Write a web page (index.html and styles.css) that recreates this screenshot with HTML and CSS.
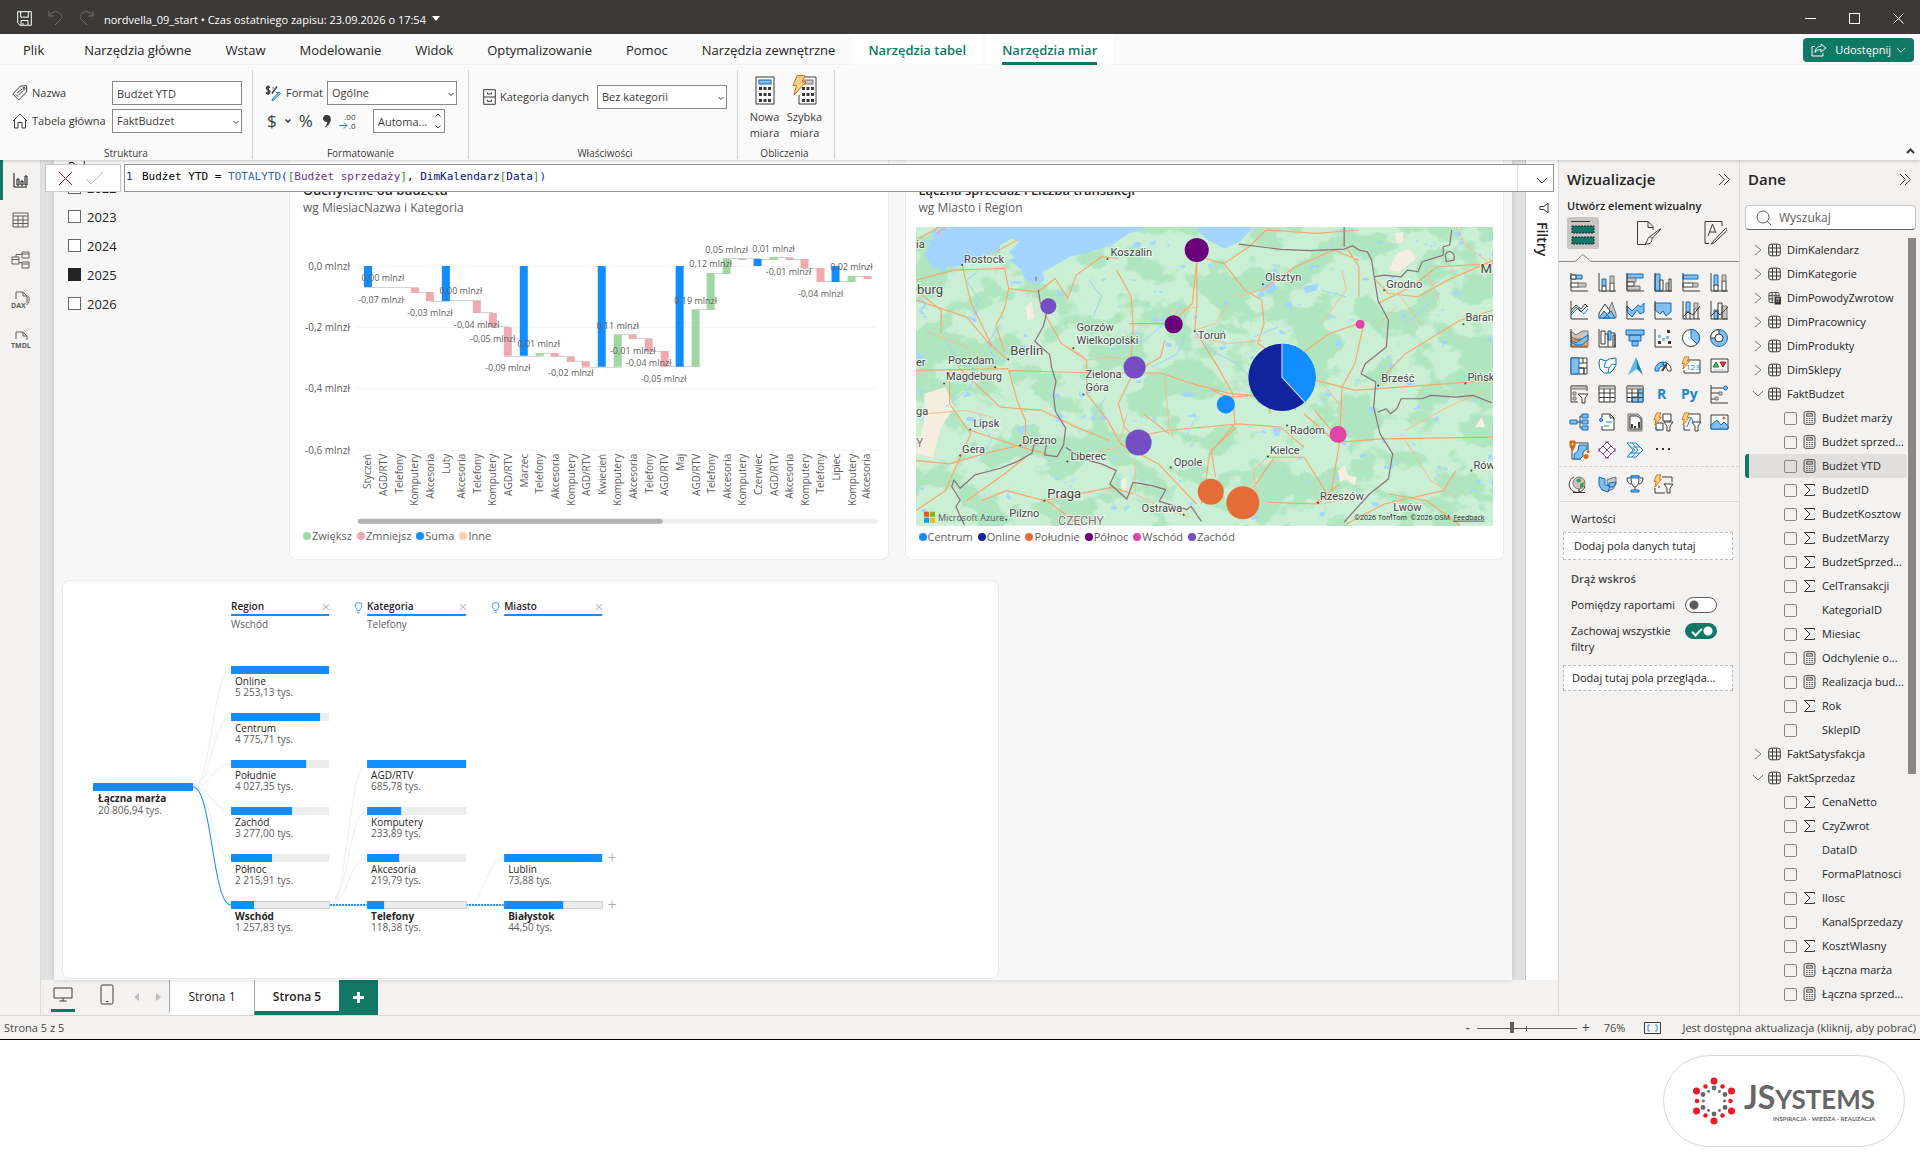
FILE: index.html
```html
<!DOCTYPE html>
<html lang="pl">
<head>
<meta charset="utf-8">
<title>nordvella_09_start</title>
<link rel="stylesheet" href="styles.css">
</head>
<body>
<svg class="defs" aria-hidden="true">
  <symbol id="table" viewBox="0 0 13 13"><rect x=".7" y=".7" width="11.6" height="11.6" rx="2.5"/><path d="M4.5 1v11M8.5 1v11M1 4.500h11M1 8.500h11"/></symbol>
  <symbol id="calc" viewBox="0 0 13 15"><rect x=".7" y=".7" width="11.6" height="13.600" rx="2"/><rect x="3.500" y="3" width="6" height="2.500"/><path d="M3 8h1.500M5.800 8h1.500M8.500 8H10M3 10.200h1.500M5.800 10.200h1.500M8.500 10.200H10M3 12.200h1.500M5.800 12.200h1.500M8.500 12.200H10"/></symbol>
  <symbol id="sum" viewBox="0 0 13 13"><path d="M11.500 2.500V1H1.500L7 6.500 1.500 12h10v-1.500"/></symbol>
  <symbol id="right" viewBox="0 0 8 12"><path d="M1 1l6 5-6 5"/></symbol>
  <symbol id="down" viewBox="0 0 12 8"><path d="M1 1l5 5 5-5"/></symbol>
  <symbol id="dbl" viewBox="0 0 13 13"><path d="M1 1l5.500 5.500L1 12M6 1l5.500 5.500L6 12"/></symbol>
  <symbol id="bolt" viewBox="0 0 10 16"><path d="M4 1h5L7 6h2.500L2 15l1.500-6.500H1z" fill="#fcd283" stroke="#d8690c"/></symbol>
  <symbol id="bulb" viewBox="0 0 10 14"><path d="M3.500 10C3.500 8 1 7 1 4.500a4 4 0 0 1 8 0C9 7 6.500 8 6.500 10zM3.500 12.500h3"/></symbol>
</svg>

<header class="titlebar">
  <button class="bare" aria-label="Zapisz"><svg width="15" height="15" viewBox="0 0 15 15"><path d="M.7.7h13.600v13.600H3L.7 12zM3.700.7v5.500h7.600V.7M4 14V9.500h7V14M6 14v-2"/></svg></button>
  <button class="bare dim" aria-label="Cofnij"><svg width="15" height="16" viewBox="0 0 15 16"><path d="M1 1v5h5M1 6C4 1 9 .5 12 3.500s1.500 5 0 6.500L7 15"/></svg></button>
  <button class="bare dim" aria-label="Ponów"><svg width="15" height="16" viewBox="0 0 15 16"><path d="M14 1v5H9M14 6C11 1 6 .5 3 3.500S1.500 8.500 3 10l5 5"/></svg></button>
  <span class="doc">nordvella_09_start • Czas ostatniego zapisu: 23.09.2026 o 17:54</span>
  <svg class="caret" width="8" height="5" viewBox="0 0 8 5"><path d="M0 0h8L4 5z"/></svg>
  <div class="winbtns">
    <button class="bare" aria-label="Minimalizuj"><svg width="11" height="11"><path d="M0 5.500h11"/></svg></button>
    <button class="bare" aria-label="Maksymalizuj"><svg width="11" height="11"><rect x=".5" y=".5" width="10" height="10"/></svg></button>
    <button class="bare" aria-label="Zamknij"><svg width="11" height="11"><path d="M.5.5l10 10M10.500.5l-10 10"/></svg></button>
  </div>
</header>

<nav class="tabs">
  <a href="#" class="first">Plik</a><a href="#">Narzędzia główne</a><a href="#">Wstaw</a><a href="#">Modelowanie</a><a href="#">Widok</a><a href="#">Optymalizowanie</a><a href="#">Pomoc</a><a href="#">Narzędzia zewnętrzne</a><a href="#" class="ctx">Narzędzia tabel</a><a href="#" class="ctx on"><span>Narzędzia miar</span></a>
  <button class="share"><svg width="16" height="14" viewBox="0 0 16 14"><path d="M4 3.500H1V13h11v-3M10 1l5 4-5 4V6.500C7 6.500 5 7.500 4 9.500 4.200 6 6 3.500 10 3.500z"/></svg>Udostępnij<svg width="10" height="7" viewBox="0 0 12 8"><path d="M1 1l5 5 5-5"/></svg></button>
</nav>

<section class="ribbon">
  <div class="group g1">
    <div class="fields">
      <svg width="16" height="16" viewBox="0 0 16 16"><path d="M8.500 1l6-.2.200 6-8 8.200L.8 9zM5 8l5-4M6.500 10l5-4.500M4 9.500L6.500 12"/><circle cx="12" cy="3.400" r="1"/></svg>
      <label for="nm">Nazwa</label><input id="nm" class="box" value="Budżet YTD">
      <svg width="16" height="16" viewBox="0 0 16 16"><path d="M1 8l7-7 7 7M2.500 7v8H6v-5.500h4V15h3.500V7"/></svg>
      <label for="tb">Tabela główna</label><span class="sel"><select id="tb" class="box"><option>FaktBudzet</option></select><svg><use href="#down"/></svg></span>
    </div>
    <div class="cap">Struktura</div>
  </div>
  <div class="group g2">
    <div class="line">
      <svg width="17" height="17" viewBox="0 0 17 17"><path d="M5 2.500C3 1 1 2 1.500 3.500S5 5 5 7 2 9 1 7.500M3.200.5v9.500M7 8.500l5-7M8 2.500v1M12 7v1" stroke-width="1.400"/><path d="M15.500 8.500L8 15.500l-1 .5.500-2L14 7z" fill="#9bd0f5" stroke="#1a86d0"/></svg>
      <label for="fm">Format</label><span class="sel"><select id="fm" class="box"><option>Ogólne</option></select><svg><use href="#down"/></svg></span>
    </div>
    <div class="line fmt">
      <button class="bare big">$</button><button class="bare" aria-label="Waluta"><svg width="6" height="4" viewBox="0 0 12 8"><path d="M1 1l5 5 5-5" stroke-width="3"/></svg></button><button class="bare big">%</button>
      <button class="bare sep" aria-label="Separator"><svg width="8" height="13" viewBox="0 0 8 13"><path d="M4 0a3.500 3.500 0 1 0 .5 6.800C4 9 3 10.500 1.500 12.500 5 11 7.800 8 7.800 4 7.800 1.500 6 0 4 0z" class="solid"/></svg></button>
      <button class="bare dec" aria-label="Miejsca dziesiętne"><span>.00</span><span><svg width="9" height="7" viewBox="0 0 9 7"><path d="M0 3.500h8M5 .5l3 3-3 3" stroke="#1a86d0"/></svg>.0</span></button>
      <span class="spin"><input class="box" aria-label="Miejsca" value="Automa..."><svg width="6" height="16" viewBox="0 0 6 16"><path d="M.5 3.500L3 1l2.500 2.500M.5 12.500L3 15l2.500-2.500"/></svg></span>
    </div>
    <div class="cap">Formatowanie</div>
  </div>
  <div class="group g3">
    <div class="line">
      <svg width="13" height="16" viewBox="0 0 13 16"><path d="M.7.7h11.600v14.600H.7zM.7 8h11.600M4.500 3.500v1.500h4V3.500M4.500 10.800v1.500h4v-1.500"/></svg>
      <label for="kt">Kategoria danych</label><span class="sel"><select id="kt" class="box"><option>Bez kategorii</option></select><svg><use href="#down"/></svg></span>
    </div>
    <div class="cap">Właściwości</div>
  </div>
  <div class="group g4">
    <div class="bigs">
      <button class="bare"><svg width="28" height="30" viewBox="0 0 28 30"><rect x="5" y="2" width="18" height="27" fill="#fff"/><rect x="8" y="5" width="12" height="4" fill="#83beec" stroke="#0f6cbd"/><path d="M8 13.500h12M8 19.500h12M8 25.500h12" stroke-width="3" stroke-dasharray="3 1.500"/></svg>Nowa<br>miara</button>
      <button class="bare"><svg width="28" height="30" viewBox="0 0 28 30"><path d="M8 20v9h17V2H12" fill="#fff"/><rect x="13" y="5" width="9" height="4" fill="#c8c6c4" stroke="#797775"/><path d="M11 13.500h12M11 19.500h12M11 25.500h12" stroke-width="3" stroke-dasharray="3 1.500"/><path d="M6 .7h8L11 7h4L3 20l2.500-9.500H2z" fill="#fcd283" stroke="#d8690c"/></svg>Szybka<br>miara</button>
    </div>
    <div class="cap">Obliczenia</div>
  </div>
  <button class="bare collapse" aria-label="Zwiń"><svg width="9" height="6" viewBox="0 0 9 6"><path d="M1 5l3.500-3.500L8 5" stroke-width="2"/></svg></button>
</section>

<main class="app">
  <nav class="rail">
    <button class="bare on" aria-label="Raport"><svg width="15" height="16" viewBox="0 0 15 16"><path d="M1 1v14h13M4 7h2v6H4zM8 9h2v4H8zM12 4h2v9h-2z"/></svg></button>
    <button class="bare" aria-label="Tabela"><svg width="17" height="16" viewBox="0 0 17 16"><path d="M1 1h15v14H1zM1 4h15M1 8h15M1 11.500h15M6 4v11M11 4v11"/></svg></button>
    <button class="bare" aria-label="Model"><svg width="19" height="18" viewBox="0 0 19 18"><path d="M1 6h7v7H1zM1 8.500h7M11 1h7v6h-7zM11 3h7M11 11h7v6h-7zM11 13h7M5 6V3.500h6M8 11.500h3"/></svg></button>
    <button class="bare" aria-label="DAX"><svg width="20" height="20" viewBox="0 0 20 20"><path d="M5 9V2h7l4 4v7M12 2v4h4M17 5.500c2 3 1.500 7-1.500 9.500"/><text x="0" y="18">DAX</text></svg></button>
    <button class="bare" aria-label="TMDL"><svg width="20" height="20" viewBox="0 0 20 20"><path d="M5 9V2h7l4 4v4M12 2v4h4"/><text x="0" y="18">TMDL</text></svg></button>
  </nav>

  <div class="center">
    <div class="stage">
      <div class="formula">
        <div class="confirm">
          <button class="bare" aria-label="Anuluj"><svg width="15" height="15"><path d="M1 1l13 13M14 1L1 14" stroke="#b50e0e"/></svg></button>
          <button class="bare" aria-label="Zatwierdź"><svg width="19" height="14"><path d="M1 8l5 5L18 1" stroke="#c0c0c0"/></svg></button>
        </div>
        <div class="editor"><code><span class="ln">1</span>Budżet YTD = <b class="fn">TOTALYTD</b><b class="p1">(</b><b class="p2">[</b><b class="ms">Budżet sprzedaży</b><b class="p2">]</b>, <b class="cl">DimKalendarz</b><b class="p2">[</b><b class="cl">Data</b><b class="p2">]</b><b class="p1">)</b></code>
          <button class="bare more" aria-label="Rozwiń"><svg width="12" height="8"><use href="#down"/></svg></button></div>
      </div>

      <div class="canvas">
        <div class="page">
          <div class="row">
            <fieldset class="slicer">
              <legend>Rok</legend>
              <label><input type="checkbox">2022</label>
              <label><input type="checkbox">2023</label>
              <label><input type="checkbox">2024</label>
              <label><input type="checkbox" checked>2025</label>
              <label><input type="checkbox">2026</label>
            </fieldset>

            <article class="card">
              <h3>Odchylenie od budżetu</h3>
              <p>wg MiesiacNazwa i Kategoria</p>
              <svg class="chart" viewBox="299 217 578 308">
                <path d="M356 266.500h521M356 327.500h521M356 388.500h521M356 450.500h521" stroke="#f3f3f3"/>
                <g class="axis"><text x="349" y="270">0,0 mlnzł</text><text x="349" y="331">-0,2 mlnzł</text><text x="349" y="392">-0,4 mlnzł</text><text x="349" y="454">-0,6 mlnzł</text></g>
                <path class="link" d="M363 287.500h55M414 292.500h18M429 301.500h20M441 300.500h39M472 312.500h20M488 326.500h20M503 356.500h40M534 353.500h24M550 356.500h24M566 361.500h24M581 367.500h40M613 334.500h24M628 338.500h24M644 351.500h24M660 366.500h40M691 309.500h24M706 273.500h24M722 258.500h38M753 259.500h24M769 257.500h24M785 259.500h24M800 268.500h24M816 281.500h40M847 276.500h24"/>
                <path fill="#118dff" d="M363 266h8v21h-8zM441 266h8v35h-8zM519 266h8v90h-8zM597 266h8v101h-8zM675 266h8v101h-8zM753 259h8v7h-8zM831 266h8v16h-8z"/>
                <path fill="#eeaab0" d="M410 288h8v5h-8zM425 292h8v9h-8zM472 301h8v12h-8zM488 313h8v14h-8zM503 327h8v29h-8zM550 353h8v4h-8zM566 357h8v5h-8zM581 362h8v5h-8zM628 335h8v4h-8zM644 339h8v12h-8zM660 351h8v16h-8zM738 259h8v1h-8zM785 258h8v2h-8zM800 259h8v9h-8zM816 268h8v14h-8zM863 276h8v3h-8z"/>
                <path fill="#a0d8a1" d="M535 353h8v3h-8zM613 335h8v32h-8zM691 310h8v57h-8zM706 273h8v37h-8zM722 259h8v15h-8zM769 257h8v3h-8zM847 276h8v6h-8z"/>
                <g class="val"><text x="382" y="281">0,00 mlnzł</text><text x="380" y="303">-0,07 mlnzł</text><text x="429" y="316">-0,03 mlnzł</text><text x="460" y="294">0,00 mlnzł</text><text x="476" y="328">-0,04 mlnzł</text><text x="492" y="342">-0,05 mlnzł</text><text x="538" y="347">0,01 mlnzł</text><text x="507" y="371">-0,09 mlnzł</text><text x="570" y="376">-0,02 mlnzł</text><text x="617" y="329">0,11 mlnzł</text><text x="632" y="354">-0,01 mlnzł</text><text x="648" y="366">-0,04 mlnzł</text><text x="663" y="382">-0,05 mlnzł</text><text x="695" y="304">0,19 mlnzł</text><text x="710" y="267">0,12 mlnzł</text><text x="726" y="253">0,05 mlnzł</text><text x="773" y="252">0,01 mlnzł</text><text x="788" y="275">-0,01 mlnzł</text><text x="851" y="270">0,02 mlnzł</text><text x="820" y="297">-0,04 mlnzł</text></g>
                <g class="cat" transform="translate(0 454) rotate(-90)"><text y="370">Styczeń</text><text y="386">AGD/RTV</text><text y="402">Telefony</text><text y="417">Komputery</text><text y="433">Akcesoria</text><text y="449">Luty</text><text y="464">Akcesoria</text><text y="480">Telefony</text><text y="495">Komputery</text><text y="511">AGD/RTV</text><text y="527">Marzec</text><text y="542">Telefony</text><text y="558">Akcesoria</text><text y="574">Komputery</text><text y="589">AGD/RTV</text><text y="605">Kwiecień</text><text y="620">Komputery</text><text y="636">Akcesoria</text><text y="652">Telefony</text><text y="667">AGD/RTV</text><text y="683">Maj</text><text y="699">AGD/RTV</text><text y="714">Telefony</text><text y="730">Akcesoria</text><text y="745">Komputery</text><text y="761">Czerwiec</text><text y="777">AGD/RTV</text><text y="792">Akcesoria</text><text y="808">Komputery</text><text y="823">Telefony</text><text y="839">Lipiec</text><text y="855">Komputery</text><text y="870">Akcesoria</text></g>
                <rect x="357" y="519" width="520" height="5" rx="2" fill="#efefef"/><rect x="357" y="519" width="305" height="5" rx="2" fill="#b3b3b3"/>
              </svg>
              <ul class="legend"><li class="c-up">Zwiększ</li><li class="c-dn">Zmniejsz</li><li class="c-bl">Suma</li><li class="c-in">Inne</li></ul>
            </article>

            <article class="card">
              <h3>Łączna sprzedaż i Liczba transakcji</h3>
              <p>wg Miasto i Region</p>
              <svg class="chart map" viewBox="917 227 576 298">
                <defs><filter id="forest" x="0" y="0" width="1" height="1" color-interpolation-filters="sRGB"><feTurbulence type="fractalNoise" baseFrequency=".024 .03" numOctaves="4" seed="12"/><feColorMatrix values="0 0 0 0 .69 0 0 0 0 .9 0 0 0 0 .75 14 0 0 0 -6.900"/></filter>
                <filter id="lakes" x="0" y="0" width="1" height="1" color-interpolation-filters="sRGB"><feTurbulence type="fractalNoise" baseFrequency=".06 .08" numOctaves="3" seed="4"/><feColorMatrix values="0 0 0 0 .64 0 0 0 0 .84 0 0 0 0 1 0 18 0 0 -13.200"/></filter></defs>
                <path fill="#caefd4" d="M916 227h577v298H916z"/>
                <rect x="916" y="227" width="577" height="298" filter="url(#forest)"/>
                <rect x="916" y="227" width="577" height="298" filter="url(#lakes)"/>
                <g class="geo" transform="translate(900 180) scale(.4209 .3333)">
                  <path fill="#f6efe0" d="M60 640l50-20 20 60-30 60-20 90-40-10 10-50 10-50zM1160 270l20-50 30-15 15 30-40 40zM300 380l15-15 5 50-15 5zM1040 870l15-15 10 30 20 5-5 25-20-20-15 10zM1365 740l15-30 10 30zM1175 160l20-5v30l-15 5zM525 900l15-10v30l-10 20z"/>
                  <path fill="#a3d5ff" d="M95 141l-20 15 10 20-25 5 15 10-15 30 20 45 32-12 12 8 26-7 25-20 55-20 35-40 15 10-30 40 40 45 10 30 30 12 15-12-5-25 25-15 40-30 50-15 50-20 40-35 40-15 40-20 40-4h32l10 29 25 30 40 25 35-20 35-45 35-19zM860 315l25-10 15 20-20 15-10-5zM955 320l40-10-5 20-25 10z"/>
                  <path fill="#caefd4" d="M240 195l30-18 15 10-25 30 15 15-30 15-25-15 20-10zM715 172l8 5 10 25-6 2z"/>
                  <g class="roads">
                    <path d="M40 300l90-30 120-5 10 60 70 10 40-40 30 60 20-70 60-55 40 5M150 256l20 110 50 130 40 45M95 141l-55 40M230 215l50-35M110 141l-20 20M260 325l-10 60-20 50 20 80M40 360l120 50 60 90M40 330l60 60 0 70M345 400l40 90 60 50 0 100 50 80 30 70 90 60 90 120M260 570l110 5 150 3 100 0 70 30 90 30 70 10 60 20M630 480l-10 50-40 30-30 30-30 80 15 70 40 60M545 430h100l50-60 10-120M515 268l35 80 5 90-5 100 10 30M706 220v150l-5 80 50 100 40 90 5 90-60 90-10 90-10 60M710 230l60 20 50 80 40 30 5 70-15 60 50 40M1090 430l-70 30-60 55M860 330l80-70 90-50 60 30M870 150l-40 50-60 50M870 150l120 10 100-10M910 500l30 190M985 690l60 90-20 150-30 40-120-5M960 800l-55-60-100-10-170 20-60 15M1100 440l-20 110-30 70-5 140M990 600l90 30 330-30M1045 785l100-10 263-5M800 740l-60 70 10 80M890 830l-50 90M985 970l60-60M500 780l-80-40-80-50-100-10-100-120M260 570l20 90 20 60 0 80M170 750l120 50 60 20M120 570l0 100 50 90-60 170-70 60M160 960l90-80 50-50M345 960l160-40 50 20M345 960l-90-30-60 30M350 960l80 74M1090 350v-90l-30-60M1135 370l80-50 60-60 140-10M1130 300l30 40 70 10 70-50 110-60M1140 600l60-80 130-100 78-30M960 700l70 80M880 700l-10-60-80 10-30-10M40 570l220-5M40 840l80 10 80-30 100-30M1160 940l90 20 80 74M1060 1030l90-60 140-40 30-60M730 620l60 40M640 760l-60-60M870 830l90 0 60 120"/>
                    <path class="thin" d="M440 540l60-10 60 10M640 440l20-50 50-10M700 470l80 20 80-10M780 370l-30 60-50 20M1000 600l60 100M630 590l10 150 10 30M1000 430l60-100-10-60M1240 440l-50-90M1250 270l30 90M60 450l100 50 70 70M60 700l100-10 60 20M400 500l40 30M800 350l80-30M1200 750l100-70 90-50M1200 780l60 120 60 50M1320 141l20 50 60 60M540 700l-20 100-90 30M560 840l0 100M850 960l-10-90 40-50M1130 440l50-60M560 940l60 40 70 30M1000 970l80-20"/>
                  </g>
                  <g class="water"><path d="M200 260l-40 40 30 60-20 40M110 480l30 60 40 30-10 50-60 60M240 430l-30 60 20 60M600 560l60-40 20-60M700 450l40 60 60 40 50 60 60 60M640 420l-60 60-80 30M900 440l-60 30M490 650l-30 60M1000 330l60 20M450 300l30 50-20 60M1200 430l60-60M190 700l30 80-30 60M700 720l-20 50M310 290l20 40"/></g>
                  <g class="bord"><path d="M325 290v12M330 328l5 40 15 30-8 40-20 45 35 40 5 40 10 40-6 40 5 50 24 50-5 50-15 35-30-5 5-35-30 5-5 25-35 25-40 20-60 20-35 40-15-25-5 20 20 40-10 20 20 55M395 800l40 35 45 15 35 20-15 40 40 45 15-50 45 10 32 12-15 35 65 25 10-10 25 45M805 192l100 16 70 4 80-5 20-10 15 13 20 5 10 25 5 40 10 80 25 60-5 80-50 50-10 30 35 25-5 75 15 80 30 60-10 75-45 45-60 84M1055 141v60M1125 290l25-5 40 5 15-20 25 5 10-30 50-20 0-25 15-5 5-45M1135 695l20-10 10 15 15-15 10-30 50 0 20-10 60 5 40-5 45 22M1295 225c5-20 25-10 20 15l-18 5z"/></g>
                </g>
                <g class="dots"><path d="M963 265h0M1108 259h0M1263 284h0M1384 290h0M1463 324h0M1195 331h0M1074 348h0M1009 359h0M996 367h0M945 383h0M1084 394h0M1378 385h0M1465 383h0M1287 425h0M1268 456h0M971 429h0M1021 445h0M961 455h0M1068 461h0M1171 467h0M1184 514h0M1318 502h0M1391 514h0M1471 470h0M1045 500h0M1007 519h0"/></g>
                <g class="city"><text x="965" y="263">Rostock</text><text x="1111" y="256">Koszalin</text><text x="1265" y="281">Olsztyn</text><text x="1386" y="288">Grodno</text><text x="1465" y="321">Baran</text><text x="1198" y="339">Toruń</text><text x="1077" y="331">Gorzów</text><text x="1077" y="344">Wielkopolski</text><text x="949" y="364">Poczdam</text><text x="947" y="380">Magdeburg</text><text x="1086" y="378">Zielona</text><text x="1086" y="391">Góra</text><text x="1381" y="382">Brześć</text><text x="1467" y="381">Pińsk</text><text x="1290" y="433">Radom</text><text x="1270" y="453">Kielce</text><text x="974" y="426">Lipsk</text><text x="1023" y="443">Drezno</text><text x="963" y="452">Gera</text><text x="1071" y="459">Liberec</text><text x="1174" y="465">Opole</text><text x="1142" y="511">Ostrawa</text><text x="1320" y="499">Rzeszów</text><text x="1393" y="510">Lwów</text><text x="1473" y="468">Rów</text><text x="1010" y="516">Pilzno</text><text x="917" y="248">ia</text><text x="917" y="366">er</text><text x="917" y="415">ga</text>
                <g class="lg"><text x="1011" y="355">Berlin</text><text x="1048" y="497">Praga</text><text x="918" y="294">burg</text><text x="1480" y="273">M</text></g><text class="ctry" x="1059" y="524">CZECHY</text><text class="ctry" x="917" y="446">Y</text></g>
                <g class="bubbles"><circle cx="1197" cy="250" r="12" fill="#6b007b"/><circle cx="1174" cy="324" r="9" fill="#6b007b"/><g fill="#744ec2"><circle cx="1049" cy="306" r="8"/><circle cx="1135" cy="367" r="11"/><circle cx="1139" cy="442" r="13"/></g><circle cx="1226" cy="404" r="9" fill="#118dff"/><g fill="#e66c37"><circle cx="1211" cy="491" r="13"/><circle cx="1243" cy="502" r="16.500"/></g><g fill="#e044a7"><circle cx="1338" cy="434" r="8.500"/><circle cx="1360" cy="324" r="4.500"/></g>
                <circle cx="1282" cy="377" r="33.500" fill="#12239e"/><path d="M1282 377v-33.500a33.500 33.500 0 0 1 23 58z" fill="#118dff" stroke="none"/><path d="M1282 343v34l23 25" stroke="#d5e4ff" fill="none"/></g>
                <path d="M925 511h5v5h-5z" fill="#f25022"/><path d="M931 511h5v5h-5z" fill="#7fba00"/><path d="M925 517h5v5h-5z" fill="#00a4ef"/><path d="M931 517h5v5h-5z" fill="#ffb900"/>
                <text class="azure" x="939" y="520">Microsoft Azure</text>
                <text class="copy" x="1484" y="519">©2026 TomTom  ©2026 OSM  <tspan text-decoration="underline">Feedback</tspan></text>
              </svg>
              <ul class="legend"><li class="c-bl">Centrum</li><li class="c-nv">Online</li><li class="c-or">Południe</li><li class="c-pu">Północ</li><li class="c-pk">Wschód</li><li class="c-vi">Zachód</li></ul>
            </article>
          </div>

          <article class="card tree">
            <svg class="chart" viewBox="63 581 935 397">
              <g class="soft"><path d="M193 787c19 0 19-117 38-117M193 787c19 0 19-70 38-70M193 787c19 0 19-23 38-23M193 787c19 0 19 23 38 23M193 787c19 0 19 71 38 71M329 905c19 0 19-141 38-141M329 905c19 0 19-94 38-94M329 905c19 0 19-47 38-47M466 905c19 0 19-47 38-47"/></g>
              <path d="M193 787c19 0 19 118 38 118" fill="none" stroke="#118dff"/><path d="M330 905h37M466 905h38" stroke="#118dff" stroke-width="2" stroke-dasharray="2 1"/>
              <path fill="#ececec" d="M231 666h98v8h-98zM231 713h98v8h-98zM231 760h98v8h-98zM231 807h98v8h-98zM231 854h98v8h-98zM231 901h98v8h-98zM367 760h99v8h-99zM367 807h99v8h-99zM367 854h99v8h-99zM367 901h99v8h-99zM504 854h98v8h-98zM504 901h98v8h-98z"/>
              <path fill="none" stroke="#cfcfcf" d="M231 901.500h98.500v7H231zM367 901.500h99.500v7H367zM504 901.500h98.500v7H504z"/>
              <path fill="#118dff" d="M93 783h100v8H93zM231 666h98v8h-98zM231 713h89v8h-89zM231 760h75v8h-75zM231 807h61v8h-61zM231 854h41v8h-41zM231 901h23v8h-23zM367 760h99v8h-99zM367 807h34v8h-34zM367 854h32v8h-32zM367 901h17v8h-17zM504 854h98v8h-98zM504 901h59v8h-59zM231 614h98v2h-98zM367 614h99v2h-99zM504 614h98v2h-98z"/>
              <g class="head"><text x="231" y="610">Region</text><text x="367" y="610">Kategoria</text><text x="504" y="610">Miasto</text></g>
              <g class="num"><text x="231" y="628">Wschód</text><text x="367" y="628">Telefony</text></g>
              <path d="M323 604l6 6M329 604l-6 6M460 604l6 6M466 604l-6 6M596 604l6 6M602 604l-6 6M608 857.500h8M612 853.500v8M608 904.500h8M612 900.500v8" stroke="#b0b0b0"/>
              <g fill="none" stroke="#118dff"><use href="#bulb" x="354" y="602" width="9" height="12"/><use href="#bulb" x="491" y="602" width="9" height="12"/></g>
              <g class="name"><text x="235" y="685">Online</text><text x="235" y="732">Centrum</text><text x="235" y="779">Południe</text><text x="235" y="826">Zachód</text><text x="235" y="873">Północ</text><text x="371" y="779">AGD/RTV</text><text x="371" y="826">Komputery</text><text x="371" y="873">Akcesoria</text><text x="508" y="873">Lublin</text></g>
              <g class="head sel-node"><text x="98" y="802">Łączna marża</text><text x="235" y="920">Wschód</text><text x="371" y="920">Telefony</text><text x="508" y="920">Białystok</text></g>
              <g class="num"><text x="98" y="814">20 806,94 tys.</text><text x="235" y="696">5 253,13 tys.</text><text x="235" y="743">4 775,71 tys.</text><text x="235" y="790">4 027,35 tys.</text><text x="235" y="837">3 277,00 tys.</text><text x="235" y="884">2 215,91 tys.</text><text x="235" y="931">1 257,83 tys.</text><text x="371" y="790">685,78 tys.</text><text x="371" y="837">233,89 tys.</text><text x="371" y="884">219,79 tys.</text><text x="371" y="931">118,38 tys.</text><text x="508" y="884">73,88 tys.</text><text x="508" y="931">44,50 tys.</text></g>
            </svg>
          </article>
        </div>
      </div>
      <aside class="filters"><svg width="10" height="12" viewBox="0 0 10 12"><path d="M9 1v10L5 7.500H1v-3h4z"/></svg><span>Filtry</span></aside>
    </div>

    <nav class="pages">
      <button class="bare view on" aria-label="Komputer"><svg width="20" height="15" viewBox="0 0 20 15"><path d="M1 1h18v10H1zM10 11v3M6.500 14h7"/></svg></button>
      <button class="bare view" aria-label="Telefon"><svg width="14" height="21" viewBox="0 0 14 21"><rect x="1" y="1" width="12" height="19" rx="1.500"/><path d="M6 17.500h2.500"/></svg></button>
      <button class="bare arr" aria-label="Wstecz"><svg width="5" height="8"><path d="M5 0v8L0 4z"/></svg></button>
      <button class="bare arr" aria-label="Dalej"><svg width="5" height="8"><path d="M0 0v8l5-4z"/></svg></button>
      <button class="bare pg">Strona 1</button><button class="bare pg on">Strona 5</button>
      <button class="bare add" aria-label="Nowa strona"><svg width="11" height="11"><path d="M5.500 0v11M0 5.500h11" stroke="#fff" stroke-width="3"/></svg></button>
    </nav>
  </div>

  <aside class="pane viz">
    <h2>Wizualizacje<svg width="13" height="13"><use href="#dbl"/></svg></h2>
    <h4>Utwórz element wizualny</h4>
    <div class="modes">
      <button class="bare on" aria-label="Kompiluj"><svg width="26" height="26" viewBox="0 0 26 26"><path d="M1 1.500h19"/><path d="M2 6h22v7H2zM2 17h22v7H2z" fill="#117865" stroke="#222" stroke-dasharray="2 1"/></svg></button>
      <button class="bare" aria-label="Formatuj"><svg width="26" height="26" viewBox="0 0 26 26"><path d="M10 24.500H1.500V1.500H12l5 5V10M12 1.500v6h5M25 9l-9 9.500-2-2L24 9zM14 17c-3 0-2 5-5 6.500 4 1.500 7-.5 7-4.500"/></svg></button>
      <button class="bare" aria-label="Analiza"><svg width="24" height="26" viewBox="0 0 24 26"><path d="M19 6V1.500H2v22h4M5 16L9.500 4 13 13M6.500 12h6M22.500 8.500L11 20.500 8 24l3.500-1.500L23.500 11c1-1.500 0-3-1-2.500z"/></svg></button>
    </div>
    <svg class="notch" viewBox="0 0 180 9" preserveAspectRatio="none"><path d="M0 8.500h16l8-7 8 7h148"/></svg>
    <div class="icons">
      <svg><path d="M1 0v18h17"/><path class="b" d="M1 2h11v4H1z"/><path class="w" d="M1 2h5v4H1zM1 10h8v4H1z"/><path class="g" d="M8 10h8v4H8z"/></svg>
      <svg><path d="M1 0v18h17"/><path class="b" d="M4 6h4v7H4z"/><path class="w" d="M4 13h4v5H4zM12 10h4v8h-4z"/><path class="g" d="M12 3h4v7h-4z"/></svg>
      <svg><path class="b" d="M1 1h16v4H1z"/><path class="g" d="M1 5h9v4H1zM1 13h13v4H1z"/><path class="w" d="M1 9h7v4H1z"/><path d="M1 0v18h17"/></svg>
      <svg><path class="b" d="M1 1h5v17H1z"/><path class="w" d="M6 7h3v11H6z"/><path class="g" d="M12 10h3v8h-3z"/><path class="w" d="M15 6h2v12h-2z"/><path d="M1 0v18h17"/></svg>
      <svg><path class="b" d="M1 2h15v4H1z"/><path class="w" d="M1 10h10v4H1z"/><path class="g" d="M11 10h5v4h-5z"/><path d="M1 0v18h17"/></svg>
      <svg><path class="b" d="M4 2h4v12H4z"/><path class="w" d="M4 12h4v6H4zM12 8h4v10h-4z"/><path class="g" d="M12 2h4v6h-4z"/><path d="M1 0v18h17"/></svg>
      <svg><path class="bl" d="M1 14l7-7 6 6 4-5"/><path d="M1 9l5-5 5 4 4-5 3 3M1 0v18M1 18h17M1 12l5-6 5 5 6-6"/></svg>
      <svg><path class="g" d="M7 17l7-16 4 12v4z"/><path class="w" d="M1 12l6-9 5 7-5 7H1z"/><path class="b" d="M1 17l5-7 6 7zM6 17l7-7 4 7z"/></svg>
      <svg><path class="b" d="M1 5l5 5 6-6 3 2 3-4v9l-4 2-3-4-5 7-5-5z"/><path d="M1 0v18h17"/></svg>
      <svg><path class="b" d="M1 2h16v9l-5 4-3-5-3 3-5-4z"/><path d="M1 0v18h17"/></svg>
      <svg><path class="b" d="M4 1h4v10H4z"/><path class="g" d="M12 2h4v6h-4z"/><path d="M1 0v18h17M4 11v7M8 11v7M12 8v10M16 8v10M1 16l5-5 5 3 7-9"/></svg>
      <svg><path class="g" d="M12 5h5v13h-5z"/><path class="b" d="M4 9h4v9H4z"/><path d="M1 0v18h17M8 18V2h4v16M1 15l5-5 4 4 8-8"/></svg>
      <svg><path class="o" d="M1 6h17v5H1zM1 15l6-5 4 3 7-4v8H1z"/><path class="g" d="M1 2l5 4 6-4h6v4l-6 4H6L1 8z"/><path class="b" d="M1 11l5 3 6-4 6-4v5l-6 5H6l-5-3z"/><path d="M1 0v18h17"/></svg>
      <svg><path class="w" d="M3 2h4v13H3zM15 6h2v11h-2z"/><path class="b" d="M10 2h3v9h-3z"/><path d="M1 0v18h17M7 5h3v13M13 4h4v14"/></svg>
      <svg><path class="b" d="M0 1h18v5H0zM3 6h12v6H3zM6 12h6v5H6z"/></svg>
      <svg><path d="M1 0v18h17"/><path class="dk" d="M4 12h3v3H4zM13 1h3v3h-3zM14 12h3v3h-3z"/><path class="lt" d="M4 6h3v3H4zM8 9h3v3H8zM12 7h3v3h-3z"/></svg>
      <svg><circle class="w" cx="9" cy="9" r="8.500"/><path class="b" d="M9 .5a8.500 8.500 0 0 1 6 14.500L9 9z"/></svg>
      <svg><circle class="b" cx="9" cy="9" r="8.500"/><path class="w" d="M.5 9A8.500 8.500 0 0 1 9 .5V5L5 9z"/><circle class="w" cx="9" cy="9" r="4"/></svg>
      <svg><path class="w" d="M1 1h16v16H1zM9 11h5v6"/><path class="b" d="M1 1h8v16H1z"/><path d="M9 6h8M13 1v5M9 11h8M14 11v6"/></svg>
      <svg><path class="w" d="M2 2l6 2 3-2 7-1v7l-3 5-3 3H6l-4-4-1-6z" stroke="#0f6cbd"/><path class="bl" d="M8 4l-2 6 5 1 3-4 4 1M11 11l-1 5"/></svg>
      <svg><path fill="#69b7dc" stroke="none" d="M10 0L2 18l9-6z"/><path fill="#1380b8" stroke="none" d="M10 0l7 18-6-6z"/></svg>
      <svg><path class="b" d="M1 14a8 8 0 0 1 8-9v4a4 4 0 0 0-4 5zM9 5a8 8 0 0 1 4 1l-3 4z"/><path class="w" d="M13 6a8 8 0 0 1 4 8h-3l-2-4z"/><path d="M8 14l4-6" stroke-width="2"/></svg>
      <svg><path class="w" d="M5 3h13v13H2v-3"/><text x="4" y="13">123</text><use href="#bolt" x="-1" y="-1" width="9" height="14"/></svg>
      <svg><path class="w" d="M1 2h17v13H1z"/><path fill="#5faf68" stroke="#217b2f" d="M3 10l3-5 3 5z"/><path fill="#e33" stroke="#a4262c" d="M10 5h6l-3 5z"/><path d="M3 13h13" stroke="#bbb"/></svg>
      <svg><path d="M8 17H1V1h16v5"/><path class="g" d="M1 1h16v3H1z"/><path class="g" d="M3 7h3v3H3zM3 12h3v3H3z"/><path class="w" d="M8 9h10l-3 4v5h-3v-5z"/></svg>
      <svg><path class="w" d="M1 1h16v16H1z"/><path class="g" d="M1 1h16v3H1z"/><path d="M1 8h16M1 12.500h16M6 4v13M12 4v13"/></svg>
      <svg><path class="w" d="M1 1h16v16H1z"/><path class="b" d="M12 4h5v13H6v-5h6z"/><path class="g" d="M1 1h16v3H1z"/><path d="M1 8h16M1 12.500h16M6 4v13M12 4v13"/></svg>
      <svg><text class="ltr" x="3" y="14">R</text></svg>
      <svg><text class="ltr" x="-1" y="14">Py</text></svg>
      <svg><path d="M1 0v18h17M1 3h14M1 8h9M1 14h5"/><circle class="b" cx="15.500" cy="3" r="2"/><path class="g" d="M9 7h3v3H9zM5 12h3v3H5z"/></svg>
      <svg><path d="M6 9h4M10 3v12M10 3h3M10 15h3M10 9h3"/><path class="b" d="M0 7h7v4H0zM12 1h6v4h-6zM12 7h6v4h-6zM12 13h6v4h-6z"/></svg>
      <svg><path class="w" d="M4 5V1h8l4 4v12H4v-4M12 1v4h4"/><path class="bl" d="M8 9h6M6 13h5"/><circle class="b" cx="3" cy="7" r="1.500"/></svg>
      <svg><path class="g" d="M2 1h10l4 4v13H2z"/><path class="w" d="M4 3h7l4 3v10H4z"/><path d="M6 15v-4M9 15v-2M13 15V9" stroke-width="2"/></svg>
      <svg><path class="w" d="M9 1h8v7H9zM2 10h7v7H2z"/><path class="bl" d="M2 14v3h4"/><use href="#bolt" x="-1" y="-1" width="9" height="14"/><path class="w" d="M10 9h9l-3 4v5h-3v-5z"/></svg>
      <svg><path class="w" d="M6 1h12v8M2 12v5h6"/><path class="bl" d="M5 14l4-10 3 7"/><use href="#bolt" x="-1" y="-1" width="9" height="14"/><path class="w" d="M10 9h9l-3 4v5h-3v-5z"/></svg>
      <svg><path class="w" d="M1 2h17v14H1z"/><path class="b" d="M1 12l6-5 4 5 3-3 4 4v3H1z"/><circle cx="14" cy="5" r="1" fill="#d8690c" stroke="#d8690c"/></svg>
      <svg><path class="w" d="M5 2h13v7M2 9v9h9"/><path class="b" d="M9 4h8v4l-4 3v4l-3 3H4v-5l4-3z"/><path fill="#d8690c" stroke="#d8690c" d="M0 0h5v5l-2.500 5L0 5z"/><circle cx="2.500" cy="3" r="1" fill="#fff" stroke="none"/><circle cx="16" cy="15.500" r="2.500" fill="#d8690c" stroke="none"/><circle cx="18" cy="10.500" r="1.500" fill="#d8690c" stroke="none"/></svg>
      <svg><path fill="#fff" stroke="#8c3a9c" d="M9 1l8 8-8 8-8-8zM5 5l8 8M13 5l-8 8M7 1h4M17 7v4M7 17h4M1 7v4"/></svg>
      <svg><path class="w" stroke="#1a86d0" d="M1 2h9l7 7-7 7H1l6-7zM3 4l6 5-6 5M6 2l6 7-6 7M14 6H7M14 12H5"/></svg>
      <svg><path d="M3 8h0M9 8h0M15 8h0" stroke-width="2" stroke-linecap="square" stroke="#333"/></svg>
    </div>
    <div class="icons extra">
      <svg><circle class="g" cx="9" cy="8" r="6"/><path fill="#3a9a4c" stroke="none" d="M6 5l4-2 1 3-3 2zM10 9l4-2-1 5-3 1z"/><path d="M4 2a8 8 0 1 0 11 9M9 14v3M3 17.500h12"/></svg>
      <svg><path class="g" d="M9 5l5-2 4-1v7l-3 5-5 2z"/><path class="b" d="M1 2l6 2v6l5 1-2 6-6-2-3-5zM11 8l7-1-2 5h-5z"/></svg>
      <svg><path class="w" d="M4 3H1c0 4 2 6 4 6M14 3h3c0 4-2 6-4 6M5 1h8c0 8-1 10-4 11-3-1-4-3-4-11zM9 12v4"/><path class="b" d="M5 1h8v2H5zM5 15h8v2H5z"/></svg>
      <svg><path d="M8 2h10v5M1 13v5h10M4 12h2M9 12h0"/><use href="#bolt" x="-1" y="-1" width="9" height="14"/><path class="w" d="M10 9h9l-3 4v5h-3v-5z"/></svg>
    </div>
    <div class="wells">
      <h5>Wartości</h5>
      <div class="drop">Dodaj pola danych tutaj</div>
      <h5 class="sb">Drąż wskroś</h5>
      <label class="tog">Pomiędzy raportami<input type="checkbox" role="switch"></label>
      <label class="tog">Zachowaj wszystkie filtry<input type="checkbox" role="switch" checked></label>
      <div class="drop lo">Dodaj tutaj pola przegląda...</div>
    </div>
  </aside>

  <aside class="pane data">
    <h2>Dane<svg width="13" height="13"><use href="#dbl"/></svg></h2>
    <div class="search"><svg width="16" height="16" viewBox="0 0 16 16"><circle cx="7" cy="7" r="6"/><path d="M11.500 11.500L15 15"/></svg><input type="search" placeholder="Wyszukaj" aria-label="Wyszukaj"></div>
    <div class="scroller">
    <ul class="fields-tree">
      <li class="t"><svg class="r"><use href="#right"/></svg><svg class="i"><use href="#table"/></svg>DimKalendarz</li>
      <li class="t"><svg class="r"><use href="#right"/></svg><svg class="i"><use href="#table"/></svg>DimKategorie</li>
      <li class="t"><svg class="r"><use href="#right"/></svg><svg class="i" viewBox="0 0 14 14"><path d="M6 12H3a2 2 0 0 1-2-2V3a2 2 0 0 1 2-2h7a2 2 0 0 1 2 2v2M1 4.500h11M1 8h5M4.500 1v11M8.500 1v4"/><rect x="7.500" y="6" width="6" height="7.500" fill="#333"/><path d="M8.500 8h4M9 10.500h1M11 10.500h1" stroke="#fff"/></svg>DimPowodyZwrotow</li>
      <li class="t"><svg class="r"><use href="#right"/></svg><svg class="i"><use href="#table"/></svg>DimPracownicy</li>
      <li class="t"><svg class="r"><use href="#right"/></svg><svg class="i"><use href="#table"/></svg>DimProdukty</li>
      <li class="t"><svg class="r"><use href="#right"/></svg><svg class="i"><use href="#table"/></svg>DimSklepy</li>
      <li class="t"><svg class="d"><use href="#down"/></svg><svg class="i"><use href="#table"/></svg>FaktBudzet</li>
      <li><label><input type="checkbox"><svg><use href="#calc"/></svg>Budżet marży</label></li>
      <li><label><input type="checkbox"><svg><use href="#calc"/></svg>Budżet sprzed...</label></li>
      <li class="on"><label><input type="checkbox"><svg><use href="#calc"/></svg>Budżet YTD</label></li>
      <li><label><input type="checkbox"><svg><use href="#sum"/></svg>BudzetID</label></li>
      <li><label><input type="checkbox"><svg><use href="#sum"/></svg>BudzetKosztow</label></li>
      <li><label><input type="checkbox"><svg><use href="#sum"/></svg>BudzetMarzy</label></li>
      <li><label><input type="checkbox"><svg><use href="#sum"/></svg>BudzetSprzed...</label></li>
      <li><label><input type="checkbox"><svg><use href="#sum"/></svg>CelTransakcji</label></li>
      <li><label><input type="checkbox"><svg></svg>KategoriaID</label></li>
      <li><label><input type="checkbox"><svg><use href="#sum"/></svg>Miesiac</label></li>
      <li><label><input type="checkbox"><svg><use href="#calc"/></svg>Odchylenie o...</label></li>
      <li><label><input type="checkbox"><svg><use href="#calc"/></svg>Realizacja bud...</label></li>
      <li><label><input type="checkbox"><svg><use href="#sum"/></svg>Rok</label></li>
      <li><label><input type="checkbox"><svg></svg>SklepID</label></li>
      <li class="t"><svg class="r"><use href="#right"/></svg><svg class="i"><use href="#table"/></svg>FaktSatysfakcja</li>
      <li class="t"><svg class="d"><use href="#down"/></svg><svg class="i"><use href="#table"/></svg>FaktSprzedaz</li>
      <li><label><input type="checkbox"><svg><use href="#sum"/></svg>CenaNetto</label></li>
      <li><label><input type="checkbox"><svg><use href="#sum"/></svg>CzyZwrot</label></li>
      <li><label><input type="checkbox"><svg></svg>DataID</label></li>
      <li><label><input type="checkbox"><svg></svg>FormaPlatnosci</label></li>
      <li><label><input type="checkbox"><svg><use href="#sum"/></svg>Ilosc</label></li>
      <li><label><input type="checkbox"><svg></svg>KanalSprzedazy</label></li>
      <li><label><input type="checkbox"><svg><use href="#sum"/></svg>KosztWlasny</label></li>
      <li><label><input type="checkbox"><svg><use href="#calc"/></svg>Łączna marża</label></li>
      <li><label><input type="checkbox"><svg><use href="#calc"/></svg>Łączna sprzed...</label></li>
    </ul>
    <div class="bar"></div>
    </div>
  </aside>
</main>

<footer class="status">
  <span>Strona 5 z 5</span>
  <div class="zoom"><button class="bare">-</button><input type="range" min="0" max="100" value="35" aria-label="Powiększenie"><button class="bare">+</button><span class="pct">76%</span>
  <svg width="17" height="12" viewBox="0 0 17 12"><path d="M.5.5h16v11H.5z"/><path d="M6 3H4v6h2M11 3h2v6h-2" stroke="#4a90c8"/></svg>
  <a href="#">Jest dostępna aktualizacja (kliknij, aby pobrać)</a></div>
</footer>

<div class="brand">
  <div class="logo">
    <svg width="44" height="50" viewBox="0 0 44 50"><g fill="#ed1c24"><circle cx="22" cy="5" r="3.500"/><circle cx="22" cy="45" r="3.500"/><circle cx="4.500" cy="15" r="3.500"/><circle cx="39.500" cy="15" r="3.500"/><circle cx="4.500" cy="35" r="3.500"/><circle cx="39.500" cy="35" r="3.500"/><circle cx="13.500" cy="10.500" r="2.300"/><circle cx="30.500" cy="10.500" r="2.300"/><circle cx="13.500" cy="39.500" r="2.300"/><circle cx="30.500" cy="39.500" r="2.300"/><circle cx="5" cy="25" r="2.300"/><circle cx="38.500" cy="25" r="2.300"/></g><g fill="#666"><circle cx="22" cy="12" r="2.400"/><circle cx="22" cy="38" r="2.400"/><circle cx="11" cy="18.500" r="2.400"/><circle cx="33" cy="18.500" r="2.400"/><circle cx="11" cy="31.500" r="2.400"/><circle cx="33" cy="31.500" r="2.400"/><circle cx="16.500" cy="15.500" r="1.400"/><circle cx="27.500" cy="15.500" r="1.400"/><circle cx="16.500" cy="34.500" r="1.400"/><circle cx="27.500" cy="34.500" r="1.400"/><circle cx="11.500" cy="25" r="1.400"/><circle cx="32.500" cy="25" r="1.400"/></g></svg>
    <div class="word"><strong><span>JS</span>YSTEMS</strong><small>INSPIRACJA - WIEDZA - REALIZACJA</small></div>
  </div>
</div>
</body>
</html>
```

FILE: styles.css
```css
* { box-sizing: border-box; }
body { margin: 0; background: #fff; color: #252423; font: 11px/16px "Segoe UI", "Open Sans", "Noto Sans", sans-serif; }
h2, h3, h4, h5, p, ul, fieldset { margin: 0; padding: 0; border: 0; font-weight: 400; }
ul { list-style: none; }
a { color: inherit; text-decoration: none; }
svg { fill: none; stroke: #3b3a39; flex: none; }
svg text { stroke: none; fill: #605e5c; }
input, select, button { font: inherit; color: inherit; margin: 0; }
.defs { position: absolute; width: 0; height: 0; }
.bare { display: flex; align-items: center; justify-content: center; padding: 0; border: 0; background: none; }
.solid { fill: #3b3a39; stroke: none; }

/* title bar */
.titlebar { display: flex; align-items: center; height: 34px; padding: 2px 0 0 17px; background: #3b3a38; color: #fff; }
.titlebar svg { stroke: #fff; }
.titlebar > .bare { margin-right: 16px; }
.titlebar .dim svg { stroke: #73716f; }
.titlebar .doc { margin: 4px 6px 0 -6px; }
.titlebar .caret { fill: #fff; stroke: none; }
.winbtns { display: flex; margin-left: auto; }
.winbtns .bare { width: 44px; height: 32px; }

/* ribbon */
.tabs { display: flex; height: 31px; padding-left: 6px; background: #fafafa; font-size: 13px; line-height: 32px; }
.tabs a { padding: 0 17px; }
.tabs .first { margin-right: 6px; }
.tabs .ctx { background: #fff; color: #117865; font-weight: 600; padding: 0 16px; margin-right: 4px; }
.tabs .on span { display: block; height: 31px; border-bottom: 3px solid #117865; }
.share { display: flex; align-items: center; gap: 8px; height: 24px; margin: 4px 6px 0 auto; padding: 0 8px; border: 0; border-radius: 4px; background: #117865; color: #fff; font-size: 11px; line-height: 16px; }
.share svg { stroke: #fff; }
.share svg:last-child { margin-left: -3px; }
.ribbon { display: flex; height: 95px; padding: 5px 0 1px; background: #fafafa; position: relative; z-index: 3; box-shadow: 0 1px 3px #0003; }
.group { display: flex; flex-direction: column; border-right: 1px solid #d2d0ce; padding: 11px 12px 0; gap: 4px; color: #3b3a39; }
.cap { margin-top: auto; text-align: center; font-size: 10px; line-height: 11px; }
.g1 { width: 253px; }
.g2 { width: 216px; }
.g3 { width: 269px; padding: 15px 10px 0 14px; }
.g4 { width: 97px; padding: 5px 11px 0 8px; }
.fields { display: grid; grid-template-columns: 16px 80px 130px; grid-auto-rows: 24px; row-gap: 4px; column-gap: 2px; align-items: center; }
.fields label { padding-left: 2px; white-space: nowrap; }
.line { display: flex; align-items: center; gap: 4px; height: 24px; }
.box { width: 130px; height: 24px; padding: 0 4px; border: 1px solid #8a8886; border-radius: 0; background: #fff; appearance: none; outline: 0; }
.sel { position: relative; display: block; height: 24px; margin-left: auto; }
.sel svg { position: absolute; right: 3px; top: 11px; width: 6px; height: 5px; stroke-width: 2; }
.fmt { gap: 8px; padding-left: 2px; }
.big { font-size: 17px; line-height: 24px; }
.sep { margin-left: 2px; }
.dec { display: block; font-size: 8px; line-height: 9px; text-align: right; }
.dec span { display: flex; align-items: center; justify-content: flex-end; height: 9px; gap: 1px; }
.spin { position: relative; margin-left: auto; margin-right: 11px; }
.spin .box { width: 72px; display: block; }
.spin svg { position: absolute; right: 4px; top: 4px; }
.bigs { display: flex; gap: 4px; justify-content: center; }
.bigs .bare { display: block; width: 36px; line-height: 16px; }
.bigs svg { display: block; margin: 0 auto 4px; }
.collapse { position: absolute; right: 5px; bottom: 6px; }

/* workspace */
.app { display: flex; border-bottom: 1px solid #d8d6d4; }
.rail { width: 41px; background: #f3f2f1; border-right: 1px solid #dcdad8; }
.rail .bare { width: 40px; height: 40px; border-left: 3px solid transparent; padding-right: 2px; }
.rail svg { stroke: #605e5c; overflow: visible; }
.rail text { font-size: 7px; font-weight: 700; }
.rail .on { border-color: #117865; }
.rail .on svg { stroke: #111; }
.center { flex: 1; min-width: 0; }
.stage { position: relative; display: flex; }
.formula { position: absolute; z-index: 2; left: 4px; right: 4px; top: 4px; height: 28px; display: flex; gap: 3px; }
.confirm { display: flex; gap: 12px; align-items: center; justify-content: center; width: 76px; padding-right: 4px; background: #fff; border: 1px solid #c8c6c4; }
.editor { flex: 1; display: flex; background: #fff; border: 1px solid #979593; }
.editor code { flex: 1; padding: 4px 0 0 1px; font: 11px/16px Consolas, "DejaVu Sans Mono", monospace; color: #000; white-space: pre; }
.editor b { font-weight: 400; }
.ln { display: inline-block; width: 16px; color: #237; }
.fn { color: #3165bb; } .p1 { color: #0431fa; } .p2 { color: #319331; } .ms { color: #68349c; } .cl { color: #001080; }
.more { width: 36px; border-left: 1px solid #ddd; padding: 6px 0 0 12px; }
.canvas { flex: 1; min-width: 0; padding: 0 13px; background: #e1e1e1; }
.page { background: #f7f7f7; padding: 0 8px 1px; box-shadow: 0 0 6px #0002; }
.row { display: flex; gap: 16px; }
.slicer { width: 211px; padding: 0 6px; font-size: 13px; }
.slicer legend { padding: 0; height: 13px; line-height: 14px; font-size: 12px; }
.slicer label { display: flex; align-items: center; gap: 6px; height: 29px; }
.slicer input { appearance: none; width: 13px; height: 13px; border: 1px solid #666; background: #fff; }
.slicer input:checked { background: #252423; border-color: #252423; }
.card { flex: 1; min-width: 0; padding: 21px 10px 11px; background: #fff; border: 1px solid #ebebeb; border-top: 0; border-radius: 0 0 8px 8px; }
.card h3, .card p { padding-left: 3px; line-height: 18px; }
.card h3 { font-size: 13px; font-weight: 600; }
.card p { font-size: 12px; color: #605e5c; }
.chart { display: block; width: 100%; height: auto; }
.chart text { font-size: 10px; }
.chart .axis text { text-anchor: end; }
.chart .val text { text-anchor: middle; font-size: 9px; }
.chart .cat text { text-anchor: end; }
.chart .link { stroke: #cfcfcf; }
.legend { display: flex; gap: 5px; line-height: 22px; padding-left: 3px; color: #605e5c; }
.legend li::before { content: ""; display: inline-block; width: 8px; height: 8px; margin-right: 1px; border-radius: 4px; background: var(--c); }
.c-up { --c: #a0d8a1; } .c-dn { --c: #eeaab0; } .c-bl { --c: #118dff; } .c-in { --c: #fdcfb0; }
.c-nv { --c: #12239e; } .c-or { --c: #e66c37; } .c-pu { --c: #6b007b; } .c-pk { --c: #e044a7; } .c-vi { --c: #744ec2; }
.map { margin-top: 10px; }
.geo path { stroke: none; }
.geo g path { fill: none; vector-effect: non-scaling-stroke; stroke-linejoin: round; }
.geo .roads path { stroke: #f5a86f; stroke-width: 1.200px; }
.geo .roads .thin { stroke: #f7bd92; stroke-width: 1px; }
.geo .water path { stroke: #9fd2ff; stroke-width: 1px; }
.geo .bord path { stroke: #8d7078; stroke-width: 1.200px; }
.map circle { stroke: none; }
.map > path { stroke: none; }
.dots path { stroke: #444; stroke-width: 2px; stroke-linecap: round; }
.map .city text { font: 11px Roboto, sans-serif; fill: #444; stroke: #ffffffa0; stroke-width: 2px; paint-order: stroke; }
.map .city .lg text { font-size: 13px; }
.map .city .ctry { fill: #8d6f78; font-size: 12px; }
.map .azure { font-size: 9px; fill: #555; }
.map .copy { font-size: 7px; fill: #222; text-anchor: end; white-space: pre; }
.tree { width: 65%; margin-top: 20px; padding: 0; border: 1px solid #ebebeb; border-radius: 8px; }
.soft path { fill: none; stroke: #efefef; }
.tree .head text { font-weight: 600; fill: #252423; }
.tree .sel-node text { font-weight: 700; }
.tree .name text { fill: #252423; }
.tree .num text { fill: #605e5c; }
.chart > path[fill^="#"] { stroke: none; }
.chart rect { stroke: none; }
.filters { width: 33px; padding: 42px 9px 0 0; background: #fff; border-left: 1px solid #c8c6c4; display: flex; flex-direction: column; align-items: flex-end; gap: 8px; }
.filters span { writing-mode: vertical-rl; font-size: 14px; font-weight: 600; line-height: 14px; }
.pages { display: flex; height: 35px; background: #f3f2f1; font-size: 12px; }
.view { width: 24px; margin-left: 10px; border-bottom: 3px solid transparent; height: 32px; }
.view.on { border-color: #117865; }
.view + .view { margin-left: 20px; margin-right: 6px; }
.arr { width: 22px; }
.arr svg { fill: #bbb; stroke: none; }
.pg { width: 85px; background: #fff; border-left: 1px solid #a8a6a4; border-bottom: 4px solid #fff; padding-top: 4px; }
.pg.on { border-bottom-color: #117865; font-weight: 600; }
.add { width: 39px; background: #117865; }

/* side panes */
.pane { width: 181px; background: #f3f2f1; border-left: 1px solid #dcdad8; }
.pane h2 { display: flex; align-items: center; justify-content: space-between; height: 38px; padding: 0 8px; font-size: 15px; font-weight: 600; }
.viz h4 { padding: 0 8px; font-weight: 600; font-size: 11px; line-height: 16px; }
.modes { display: flex; justify-content: space-between; padding: 3px 8px 0; }
.modes .bare { width: 32px; height: 32px; border-radius: 2px; }
.modes .on { background: #c8c6c4; }
.notch { display: block; width: 100%; height: 9px; margin-top: 4px; stroke: #8a8886; }
.icons { display: grid; grid-template-columns: repeat(6, 18px); gap: 10px; padding: 11px 11px 7px; }
.icons svg { width: 18px; height: 18px; overflow: visible; }
.icons .b { fill: #83beec; stroke: #0f6cbd; }
.icons .bl { stroke: #1a86d0; }
.icons .g { fill: #c8c6c4; stroke: #797775; }
.icons .w { fill: #fff; }
.icons .o { fill: #f2a65a; stroke: #d8690c; }
.icons .dk { fill: #3b3a39; stroke: none; }
.icons .lt { fill: #83beec; stroke: none; }
.icons text { font-size: 8px; fill: #1a86d0; }
.icons .ltr { font-size: 14px; font-weight: 700; }
.icons.extra { margin: 0; padding: 8px 11px; height: 35px; border-top: 1px dashed #d2d0ce; }
.wells { border-top: 1px solid #dcdad8; padding: 9px 6px 0 4px; }
.wells h5 { font-size: 11px; padding: 0 8px; line-height: 16px; }
.wells .sb { font-weight: 600; color: #484644; padding-bottom: 10px; }
.drop { margin: 5px 0 11px; padding: 0 10px; height: 28px; line-height: 26px; background: #fff; border: 1px dashed #bdbbb9; white-space: nowrap; }
.drop.lo { height: 26px; line-height: 24px; padding: 0 8px; margin-top: 8px; }
.tog { display: flex; justify-content: space-between; padding: 0 16px 0 8px; margin-bottom: 10px; }
.tog input { appearance: none; flex: none; width: 32px; height: 16px; border: 1px solid #605e5c; border-radius: 8px; background: radial-gradient(circle at 8px 7px, #605e5c 4px, #fff 5px); }
.tog input:checked { border-color: #117865; background: radial-gradient(circle at 22px 7px, #fff 4px, #117865 5px); position: relative; }
.tog input:checked::after { content: ""; position: absolute; left: 8px; top: 2px; width: 4px; height: 8px; border: solid #fff; border-width: 0 2px 2px 0; transform: rotate(45deg); }
.search { display: flex; align-items: center; gap: 7px; height: 25px; margin: 7px 4px 8px 5px; padding-left: 10px; background: #fff; border: 1px solid #c8c6c4; border-bottom-color: #605e5c; border-radius: 4px; }
.search svg { stroke: #605e5c; }
.search input { flex: 1; min-width: 0; border: 0; background: none; font-size: 12px; outline: 0; padding: 0; }
.search input::placeholder { color: #605e5c; }
.scroller { display: flex; padding: 0 4px 9px 5px; }
.bar { width: 8px; height: 536px; background: #8a8886; }
.fields-tree { flex: 1; min-width: 0; }
.fields-tree li { height: 24px; padding-left: 39px; white-space: nowrap; }
.fields-tree .t { padding-left: 8px; display: flex; align-items: center; gap: 6px; }
.fields-tree .i { margin-left: -1px; }
.fields-tree label { display: flex; align-items: center; height: 24px; gap: 6px; }
.fields-tree svg { width: 13px; height: 14px; }
.fields-tree .r { width: 10px; height: 12px; stroke: #797775; }
.fields-tree .d { width: 12px; height: 8px; stroke: #797775; margin: 0 -1px; }
.fields-tree input { appearance: none; width: 13px; height: 13px; border: 1px solid #8a8886; border-radius: 2px; }
.fields-tree .on { margin-right: 1px; padding-left: 35px; background: #e1dfdd; border-left: 4px solid #117865; border-radius: 3px; }

/* footer */
.status { display: flex; justify-content: space-between; align-items: center; height: 24px; padding: 0 4px; background: #f3f2f1; border-bottom: 1px solid #000; color: #484644; font-size: 11px; }
.zoom { display: flex; align-items: center; }
.zoom .bare { width: 18px; font-size: 14px; }
.zoom input { appearance: none; width: 100px; height: 12px; background: linear-gradient(#605e5c, #605e5c) 0 6px / 100% 1px no-repeat, linear-gradient(#605e5c, #605e5c) 49px 4px / 1px 5px no-repeat; }
.zoom input::-webkit-slider-thumb { appearance: none; width: 4px; height: 11px; background: #605e5c; }
.pct { margin: 0 19px 0 9px; }
.zoom a { margin-left: 21px; }
.brand { display: flex; justify-content: flex-end; padding: 15px 15px; }
.logo { display: flex; align-items: center; width: 242px; height: 92px; padding: 0 28px; gap: 8px; border: 1px solid #d9d9d9; border-radius: 46px; }
.logo svg { stroke: none; }
.word { display: flex; flex-direction: column; color: #666; font-family: Lato, sans-serif; }
.word strong { font-size: 26px; line-height: 32px; }
.word span { font-size: 32px; }
.word small { align-self: flex-end; font-size: 6px; line-height: 7px; font-weight: 700; }
```
